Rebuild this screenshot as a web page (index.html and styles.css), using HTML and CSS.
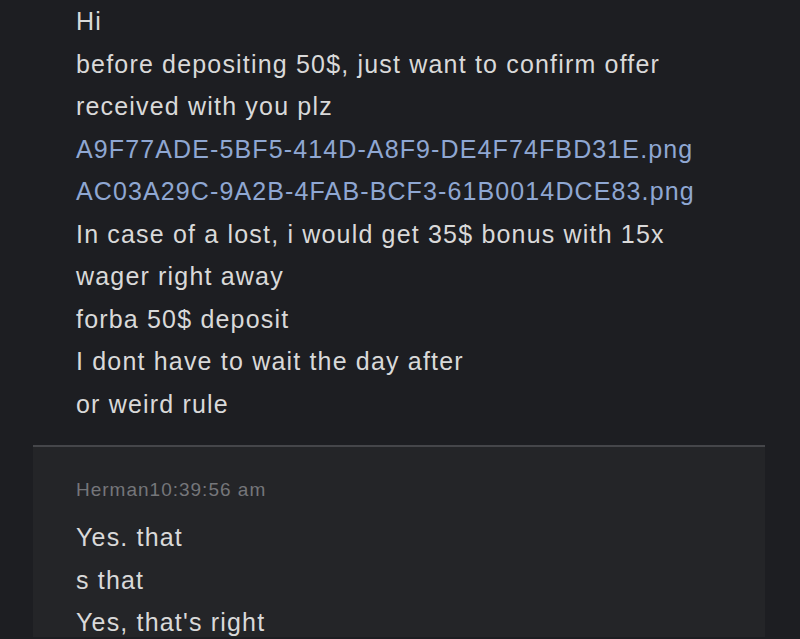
FILE: index.html
```html
<!DOCTYPE html>
<html>
<head>
<meta charset="utf-8">
<link rel="stylesheet" href="styles.css">
</head>
<body>
<div class="thread">
  <div class="message">
    <div class="line">Hi</div>
    <div class="line">before depositing 50$, just want to confirm offer</div>
    <div class="line">received with you plz</div>
    <div class="line"><a class="file">A9F77ADE-5BF5-414D-A8F9-DE4F74FBD31E.png</a></div>
    <div class="line"><a class="file">AC03A29C-9A2B-4FAB-BCF3-61B0014DCE83.png</a></div>
    <div class="line">In case of a lost, i would get 35$ bonus with 15x</div>
    <div class="line">wager right away</div>
    <div class="line">forba 50$ deposit</div>
    <div class="line">I dont have to wait the day after</div>
    <div class="line">or weird rule</div>
  </div>
  <div class="reply">
    <div class="meta"><span class="author">Herman</span><span class="time">10:39:56 am</span></div>
    <div class="line">Yes. that</div>
    <div class="line">s that</div>
    <div class="line">Yes, that's right</div>
  </div>
</div>
</body>
</html>
```
FILE: styles.css
```css
html, body {
  margin: 0;
  padding: 0;
  background: #1d1e22;
  height: 100%;
  overflow: hidden;
}
.thread {
  font-family: "Liberation Sans", Arial, sans-serif;
  color: #d9d9d9;
  font-size: 25px;
  letter-spacing: 1.18px;
}
.message {
  padding: 0 0 20px 76px;
}
.line {
  line-height: 42.5px;
  white-space: nowrap;
}
.file {
  color: #8fa7d2;
  text-decoration: none;
  letter-spacing: 1.12px;
}
.reply {
  margin: 0 35px 0 33px;
  border-top: 2px solid #45464a;
  background: #242528;
  padding: 30px 0 0 43px;
  height: 160px;
}
.meta {
  font-size: 19px;
  line-height: 26px;
  letter-spacing: 1px;
  color: #75767a;
  margin-bottom: 13px;
}
```
